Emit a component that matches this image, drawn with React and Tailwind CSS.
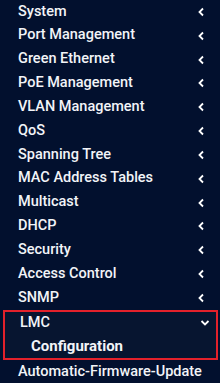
const items = [
  "System",
  "Port Management",
  "Green Ethernet",
  "PoE Management",
  "VLAN Management",
  "QoS",
  "Spanning Tree",
  "MAC Address Tables",
  "Multicast",
  "DHCP",
  "Security",
  "Access Control",
  "SNMP",
];

function ChevronLeft() {
  return (
    <svg width="8" height="10" viewBox="0 0 8 10" className="shrink-0">
      <path d="M6 1.5 L2.5 5 L6 8.5" fill="none" stroke="#ffffff" strokeWidth="1.8" />
    </svg>
  );
}

function ChevronDown() {
  return (
    <svg width="10" height="8" viewBox="0 0 10 8" className="shrink-0">
      <path d="M1.5 2 L5 5.5 L8.5 2" fill="none" stroke="#ffffff" strokeWidth="1.8" />
    </svg>
  );
}

export default function App() {
  return (
    <div
      className="w-[220px] h-[383px] bg-[#02102e] text-[#f2f4f8] overflow-hidden"
      style={{ fontFamily: 'Roboto, "Noto Sans", sans-serif' }}
    >
      <ul className="flex flex-col">
        {items.map((label) => (
          <li
            key={label}
            className="h-[23.83px] flex items-center justify-between pl-[18px] pr-[15px] text-[14.5px] font-medium leading-none"
          >
            <span>{label}</span>
            <ChevronLeft />
          </li>
        ))}
      </ul>

      {/* 展開中的 LMC */}
      <div className="ml-[3px] w-[215px] border-2 border-[#e3212b] bg-[#071530]">
        <div className="h-[23px] flex items-center justify-between pl-[15px] pr-[6px] text-[14.5px] font-medium leading-none">
          <span>LMC</span>
          <ChevronDown />
        </div>
        <div className="h-[23px] flex items-center pl-[26px] text-[15px] font-bold leading-none">
          Configuration
        </div>
      </div>

      <div className="h-[24px] flex items-center pl-[18px] text-[14.5px] font-medium leading-none">
        Automatic-Firmware-Update
      </div>
    </div>
  );
}
